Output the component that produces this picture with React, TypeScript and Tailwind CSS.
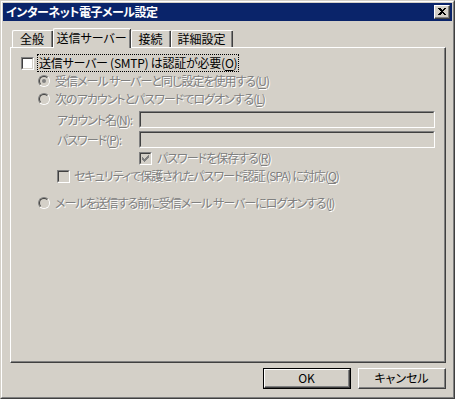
import React from 'react';

const CHECK_PX: [number, number, number][] = [
  [6, 0, 1],
  [5, 1, 2],
  [0, 2, 1],
  [4, 2, 3],
  [0, 3, 2],
  [3, 3, 3],
  [0, 4, 5],
  [1, 5, 3],
  [2, 6, 1],
];

const Check: React.FC<{ checked?: boolean; disabled?: boolean }> = ({ checked, disabled }) => (
  <span className="flex w-[13px] h-[13px] shrink-0 border border-t-[#808080] border-l-[#808080] border-r-white border-b-white">
    <span
      className={`flex flex-1 items-center justify-center border border-t-[#404040] border-l-[#404040] border-r-[#d4d0c8] border-b-[#d4d0c8] ${
        disabled ? 'bg-[#d4d0c8]' : 'bg-white'
      }`}
    >
      {checked && (
        <svg width="7" height="7" viewBox="0 0 7 7" shapeRendering="crispEdges">
          {CHECK_PX.map(([x, y, w]) => (
            <rect key={`${x}-${y}`} x={x} y={y} width={w} height={1} fill={disabled ? '#808080' : '#000'} />
          ))}
        </svg>
      )}
    </span>
  </span>
);

const Radio: React.FC<{ on?: boolean }> = ({ on }) => (
  <span className="flex w-[12px] h-[12px] shrink-0 rounded-full border border-t-[#808080] border-l-[#808080] border-r-white border-b-white">
    <span className="flex flex-1 items-center justify-center rounded-full border border-t-[#404040] border-l-[#404040] border-r-[#d4d0c8] border-b-[#d4d0c8] bg-[#d4d0c8]">
      {on && <span className="w-[4px] h-[4px] rounded-full bg-[#808080]" />}
    </span>
  </span>
);

// 灰色表示のラベル（白い影付き）
const Dim: React.FC<{ children: React.ReactNode }> = ({ children }) => (
  <span className="text-[#808080] [text-shadow:1px_1px_0_#ffffff] whitespace-nowrap tracking-[-1px]">{children}</span>
);

const Key: React.FC<{ k: string }> = ({ k }) => (
  <>
    (<span className="underline underline-offset-2">{k}</span>)
  </>
);

const Field: React.FC = () => (
  <span className="flex w-[296px] h-[17px] shrink-0 border border-t-[#808080] border-l-[#808080] border-r-white border-b-white">
    <span className="flex-1 border border-t-[#404040] border-l-[#404040] border-r-[#d4d0c8] border-b-[#d4d0c8] bg-[#d4d0c8]" />
  </span>
);

const Tab: React.FC<{ label: string; w: string; active?: boolean }> = ({ label, w, active }) =>
  active ? (
    <div className={`${w} relative z-10 -mb-px h-[20px] flex border-l border-t border-white rounded-tl-[2px] rounded-tr-[2px] bg-[#d4d0c8]`}>
      <div className="flex-1 flex items-start justify-center pt-[1px] border-r border-[#404040]">
        <div className="flex-1 h-full flex justify-center border-r border-[#808080]">{label}</div>
      </div>
    </div>
  ) : (
    <div className={`${w} h-[17px] flex border-l border-t border-white rounded-tl-[2px] rounded-tr-[2px]`}>
      <div className="flex-1 flex border-r border-[#404040]">
        <div className="flex-1 flex items-start justify-center border-r border-[#808080] leading-[15px]">{label}</div>
      </div>
    </div>
  );

const Btn: React.FC<{ children: React.ReactNode; def?: boolean }> = ({ children, def }) => (
  <div className={`w-[88px] h-[21px] flex ${def ? 'border border-black' : ''}`}>
    <div className="flex-1 flex border border-t-white border-l-white border-r-[#404040] border-b-[#404040]">
      <div className="flex-1 flex items-center justify-center border-r border-b border-[#808080]">{children}</div>
    </div>
  </div>
);

export default function App() {
  return (
    <div className="w-[455px] h-[399px] flex bg-[#d4d0c8] border border-t-[#d4d0c8] border-l-[#d4d0c8] border-r-[#404040] border-b-[#404040] font-['Noto_Sans_CJK_JP',sans-serif] [font-feature-settings:'palt'] text-[12px] leading-[16px] text-black">
      <div className="flex-1 flex flex-col p-px border border-t-white border-l-white border-r-[#808080] border-b-[#808080]">
        {/* タイトルバー */}
        <div className="h-[18px] flex items-center bg-[#0a246a] pl-[3px] pr-[2px]">
          <span className="text-white font-bold tracking-[-0.5px]">インターネット電子メール設定</span>
          <div className="ml-auto w-[16px] h-[14px] flex border border-t-white border-l-white border-r-[#404040] border-b-[#404040] bg-[#d4d0c8]">
            <div className="flex-1 flex items-center justify-center border-r border-b border-[#808080]">
              <svg width="8" height="7" viewBox="0 0 8 7" shapeRendering="crispEdges">
                <path d="M0 0h2l2 2 2-2h2L5 3.5 8 7H6L4 5 2 7H0l3-3.5z" fill="#000" />
              </svg>
            </div>
          </div>
        </div>

        <div className="flex flex-col pl-[7px] pr-[6px]">
          {/* タブ */}
          <div className="mt-[7px] h-[19px] flex items-end pl-[2px]">
            <Tab label="全般" w="w-[41px]" />
            <Tab label="送信サーバー" w="w-[78px]" active />
            <Tab label="接続" w="w-[40px]" />
            <Tab label="詳細設定" w="w-[62px]" />
          </div>

          {/* タブ本体 */}
          <div className="h-[316px] flex border-t border-l border-white border-r border-b border-r-[#404040] border-b-[#404040]">
            <div className="flex-1 flex flex-col border-r border-b border-[#808080]">
              <div className="mt-[7px] h-[16px] flex items-center pl-[10px]">
                <Check />
                <span className="ml-[4px] px-px outline-1 outline-dotted outline-black whitespace-nowrap tracking-[-0.25px]">
                  送信サーバー (SMTP) は認証が必要<Key k="O" />
                </span>
              </div>

              <div className="mt-[2px] h-[16px] flex items-center pl-[27px] gap-[5px]">
                <Radio on />
                <Dim>
                  受信メール サーバーと同じ設定を使用する<Key k="U" />
                </Dim>
              </div>

              <div className="mt-[2px] h-[16px] flex items-center pl-[27px] gap-[5px]">
                <Radio />
                <Dim>
                  次のアカウントとパスワードでログオンする<Key k="L" />
                </Dim>
              </div>

              <div className="mt-[4px] h-[17px] flex items-center pl-[46px]">
                <span className="w-[82px] shrink-0">
                  <Dim>
                    アカウント名<Key k="N" />:
                  </Dim>
                </span>
                <Field />
              </div>

              <div className="mt-[3px] h-[17px] flex items-center pl-[46px]">
                <span className="w-[82px] shrink-0">
                  <Dim>
                    パスワード<Key k="P" />:
                  </Dim>
                </span>
                <Field />
              </div>

              <div className="mt-[2px] h-[16px] flex items-center pl-[128px] gap-[5px]">
                <Check checked disabled />
                <Dim>
                  パスワードを保存する<Key k="R" />
                </Dim>
              </div>

              <div className="mt-[2px] h-[16px] flex items-center pl-[46px] gap-[4px]">
                <Check disabled />
                <Dim>
                  セキュリティで保護されたパスワード認証 (SPA) に対応<Key k="Q" />
                </Dim>
              </div>

              <div className="mt-[11px] h-[16px] flex items-center pl-[27px] gap-[5px]">
                <Radio />
                <Dim>
                  メールを送信する前に受信メール サーバーにログオンする<Key k="I" />
                </Dim>
              </div>
            </div>
          </div>

          {/* ボタン */}
          <div className="mt-[5px] flex justify-end gap-[7px]">
            <Btn def>OK</Btn>
            <Btn>キャンセル</Btn>
          </div>
        </div>
      </div>
    </div>
  );
}
